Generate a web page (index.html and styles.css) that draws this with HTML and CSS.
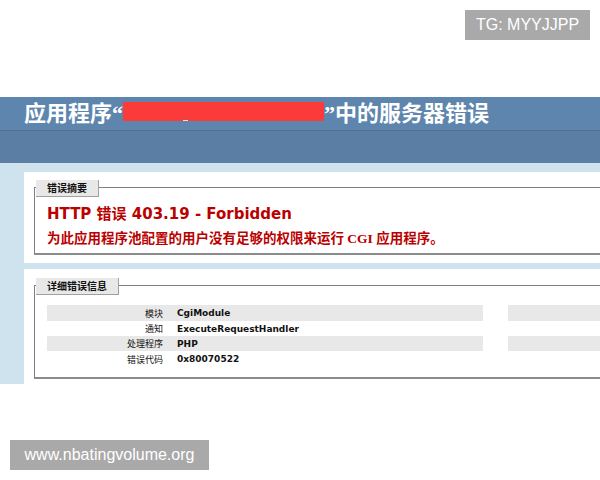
FILE: index.html
```html
<!DOCTYPE html>
<html lang="zh-CN">
<head>
<meta charset="utf-8">
<title>IIS 错误</title>
<link rel="stylesheet" href="styles.css">
</head>
<body>
<div class="topgap"></div>
<div class="title">
  <span class="ttext">应用程序“</span><span class="redact"><span class="uscore"></span></span><span class="ttext">”中的服务器错误</span>
</div>
<div class="subbar"></div>
<div class="main">
  <div class="panel p1">
    <div class="box b1">
      <div class="legend">错误摘要</div>
      <h2 class="errhead">HTTP 错误 403.19 - Forbidden</h2>
      <p class="errdesc">为此应用程序池配置的用户没有足够的权限来运行 CGI 应用程序。</p>
    </div>
  </div>
  <div class="panel p2">
    <div class="box b2">
      <div class="legend">详细错误信息</div>
      <div class="details">
        <div class="lab alt">模块</div><div class="val alt">CgiModule</div><div class="sep"></div><div class="rest alt"></div>
        <div class="lab">通知</div><div class="val">ExecuteRequestHandler</div><div class="sep"></div><div class="rest"></div>
        <div class="lab alt">处理程序</div><div class="val alt">PHP</div><div class="sep"></div><div class="rest alt"></div>
        <div class="lab">错误代码</div><div class="val">0x80070522</div><div class="sep"></div><div class="rest"></div>
      </div>
    </div>
  </div>
</div>
<div class="wm wm-top">TG: MYYJJPP</div>
<div class="wm wm-bottom">www.nbatingvolume.org</div>
</body>
</html>
```
FILE: styles.css
```css
html, body {
  margin: 0;
  padding: 0;
  overflow: hidden;
  background: #ffffff;
}
body {
  width: 600px;
  height: 480px;
  position: relative;
  font-family: "DejaVu Sans", "Noto Sans CJK SC", sans-serif;
}
.topgap {
  height: 97px;
}
.title {
  height: 33px;
  background: #5d85ad;
  border-bottom: 1px solid #4e7196;
  display: flex;
  align-items: center;
  padding-left: 24px;
  color: #ffffff;
  font-family: "Liberation Serif", "Noto Sans CJK SC", serif;
  font-size: 22px;
  font-weight: 700;
  line-height: 33px;
}
.ttext {
  white-space: nowrap;
}
.redact {
  width: 201px;
  height: 19px;
  background: #fb3a3a;
  align-self: flex-start;
  margin-top: 5px;
  display: flex;
  align-items: flex-end;
  padding-left: 60px;
  box-sizing: border-box;
}
.uscore {
  display: block;
  width: 5px;
  height: 1px;
  background: #f3dede;
}
.subbar {
  height: 32px;
  background: #5a7ea4;
}
.main {
  background: #cfe3ee;
  padding: 9px 0 0 24px;
  display: flex;
  flex-direction: column;
  gap: 6px;
}
.panel {
  background: #ffffff;
  padding-left: 10px;
}
.p1 {
  padding-top: 15px;
  padding-bottom: 8px;
}
.p2 {
  padding-top: 16px;
  padding-bottom: 5px;
}
.box {
  border-top: 1px solid #808080;
  border-left: 1px solid #808080;
  border-bottom: 2px solid #8c8c8c;
  padding-left: 12px;
}
.b1 {
  padding-bottom: 6px;
}
.b2 {
  padding-bottom: 10px;
}
.legend {
  display: block;
  width: fit-content;
  margin-top: -8px;
  margin-left: -11px;
  height: 16px;
  line-height: 16px;
  padding: 0 11px;
  background: #e8e8e8;
  border-right: 1px solid #a0a0a0;
  border-bottom: 1px solid #a0a0a0;
  font-family: "Noto Sans CJK SC", sans-serif;
  font-size: 10px;
  font-weight: 700;
  color: #111111;
}
.errhead {
  margin: 8px 0 0 0;
  font-family: "DejaVu Sans", "Noto Sans CJK SC", sans-serif;
  font-size: 15px;
  line-height: 18px;
  font-weight: 700;
  color: #bb0000;
}
.errdesc {
  margin: 8px 0 0 0;
  font-family: "Liberation Serif", "Noto Sans CJK SC", serif;
  font-size: 13.5px;
  line-height: 16px;
  font-weight: 700;
  color: #bb0000;
}
.details {
  margin-top: 10px;
  display: grid;
  grid-template-columns: 130px 306px 25px 1fr;
  grid-template-rows: 16px 15px 15px 16px;
  font-size: 9px;
  color: #111111;
}
.details > div {
  display: flex;
  align-items: center;
}
.alt {
  background: #e8e8e8;
}
.lab {
  justify-content: flex-end;
  padding-right: 14px;
  font-family: "Noto Sans CJK SC", sans-serif;
}
.val {
  font-family: "DejaVu Sans", "Noto Sans CJK SC", sans-serif;
  font-weight: 700;
}
.wm {
  position: absolute;
  background: #a9a9a9;
  color: #ffffff;
  font-family: "Liberation Sans", "Noto Sans", sans-serif;
  font-size: 16px;
  height: 30px;
  line-height: 30px;
  text-align: center;
}
.wm-top {
  left: 465px;
  top: 10px;
  width: 125px;
}
.wm-bottom {
  left: 10px;
  top: 440px;
  width: 199px;
}
```
